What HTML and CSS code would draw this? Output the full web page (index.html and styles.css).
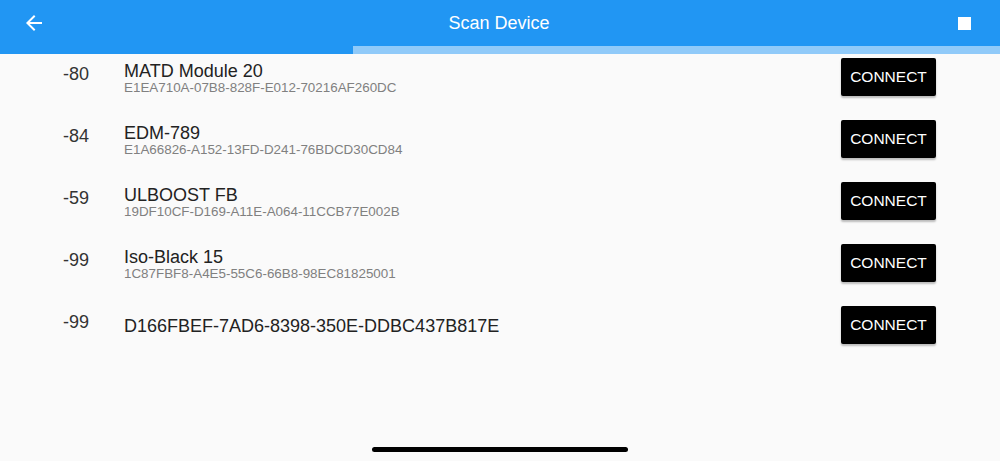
FILE: index.html
```html
<!DOCTYPE html>
<html lang="en">
  <head>
    <meta charset="UTF-8" />
    <meta name="viewport" content="width=device-width, initial-scale=1.0" />
    <title>Scan Device</title>
    <link rel="stylesheet" href="styles.css">
  </head>
  <body>
    <div class="app">
      <header class="app-bar">
        <button class="icon-btn back-btn" title="Back">
          <svg width="24" height="24" viewBox="0 0 24 24">
            <path d="M20 11H7.83l5.59-5.59L12 4l-8 8 8 8 1.41-1.41L7.83 13H20v-2z" fill="#fff" />
          </svg>
        </button>
        <h1>Scan Device</h1>
        <button class="icon-btn stop-btn" title="Stop scan">
          <span class="stop-square"></span>
        </button>
      </header>

      <!-- indeterminate scan progress -->
      <div class="progress">
        <div class="progress-bar"></div>
      </div>

      <ul class="device-list">
        <li class="device">
          <span class="rssi">-80</span>
          <div class="info">
            <div class="name">MATD Module 20</div>
            <div class="uuid">E1EA710A-07B8-828F-E012-70216AF260DC</div>
          </div>
          <button class="connect-btn">CONNECT</button>
        </li>
        <li class="device">
          <span class="rssi">-84</span>
          <div class="info">
            <div class="name">EDM-789</div>
            <div class="uuid">E1A66826-A152-13FD-D241-76BDCD30CD84</div>
          </div>
          <button class="connect-btn">CONNECT</button>
        </li>
        <li class="device">
          <span class="rssi">-59</span>
          <div class="info">
            <div class="name">ULBOOST FB</div>
            <div class="uuid">19DF10CF-D169-A11E-A064-11CCB77E002B</div>
          </div>
          <button class="connect-btn">CONNECT</button>
        </li>
        <li class="device">
          <span class="rssi">-99</span>
          <div class="info">
            <div class="name">Iso-Black 15</div>
            <div class="uuid">1C87FBF8-A4E5-55C6-66B8-98EC81825001</div>
          </div>
          <button class="connect-btn">CONNECT</button>
        </li>
        <li class="device">
          <span class="rssi">-99</span>
          <div class="info">
            <div class="name">D166FBEF-7AD6-8398-350E-DDBC437B817E</div>
          </div>
          <button class="connect-btn">CONNECT</button>
        </li>
      </ul>

      <div class="home-indicator"></div>
    </div>
  </body>
</html>
```

FILE: styles.css
```css
body {
  font-family: "Liberation Sans", Arial, sans-serif;
  background-color: #fafafa;
  margin: 0;
  padding: 0;
}

.app {
  position: relative;
  width: 1000px;
  height: 461px;
  overflow: hidden;
}

/* Top bar */
.app-bar {
  height: 46px;
  background-color: #2196f3;
  display: flex;
  align-items: center;
  padding: 0 24px 0 22px;
}

.app-bar h1 {
  flex: 1;
  margin: 0;
  text-align: center;
  color: #fff;
  font-size: 18px;
  font-weight: 400;
}

.icon-btn {
  width: 24px;
  height: 24px;
  padding: 0;
  border: none;
  background: none;
  display: flex;
  align-items: center;
  justify-content: center;
  cursor: pointer;
}

.stop-square {
  width: 13px;
  height: 13px;
  background-color: #fff;
}

/* Progress */
.progress {
  height: 8px;
  background-color: #90caf9;
}

.progress-bar {
  width: 353px;
  height: 100%;
  background-color: #2196f3;
}

/* Device rows */
.device-list {
  list-style: none;
  margin: 0;
  padding: 0;
}

.device {
  height: 62px;
  box-sizing: border-box;
  display: flex;
  align-items: flex-start;
  padding: 4px 64px 0 63px;
}

.rssi {
  width: 61px;
  margin-top: 6px;
  font-size: 18px;
  color: #333;
}

.info {
  flex: 1;
  height: 38px;
  margin-top: 1px;
  display: flex;
  flex-direction: column;
  justify-content: center;
}

.name {
  font-size: 18px;
  color: #222;
  line-height: 18px;
}

.uuid {
  margin-top: 1px;
  font-size: 13.4px;
  color: #808080;
  line-height: 14px;
}

.connect-btn {
  width: 95px;
  height: 38px;
  padding: 0;
  border: none;
  border-radius: 2px;
  background-color: #000;
  color: #fff;
  font-family: inherit;
  font-size: 15.5px;
  box-shadow: 0 2px 2px rgba(0, 0, 0, 0.25);
  cursor: pointer;
}

/* iOS home indicator */
.home-indicator {
  position: absolute;
  left: 372px;
  bottom: 9px;
  width: 256px;
  height: 5px;
  border-radius: 3px;
  background-color: #000;
}
```
